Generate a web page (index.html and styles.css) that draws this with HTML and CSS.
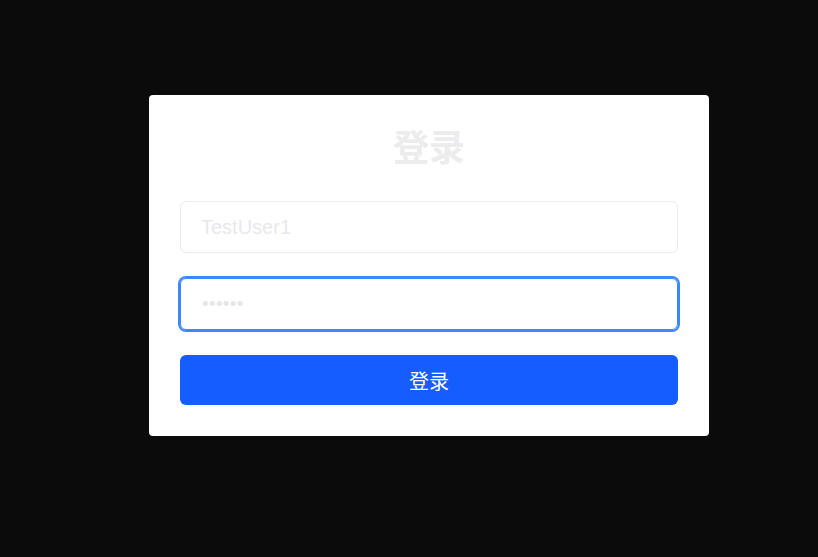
FILE: index.html
```html
<!DOCTYPE html>
<html lang="zh">
<head>
<meta charset="utf-8">
<title>登录</title>
<link rel="stylesheet" href="styles.css">
</head>
<body>
<main class="page">
  <form class="card">
    <h1 class="title">登录</h1>
    <div class="field">TestUser1</div>
    <div class="field field-focus"><span class="dots">••••••</span></div>
    <button type="button" class="btn">登录</button>
  </form>
</main>
</body>
</html>
```
FILE: styles.css
```css
html, body {
  margin: 0;
  padding: 0;
  background: #0b0b0b;
  width: 818px;
  height: 557px;
  overflow: hidden;
}
.page {
  display: flex;
  justify-content: flex-start;
  padding: 95px 0 0 149px;
  font-family: "Liberation Sans", Arial, "Noto Sans CJK SC", sans-serif;
}
.card {
  box-sizing: border-box;
  width: 560px;
  height: 341px;
  background: #ffffff;
  border-radius: 4px;
  padding: 23px 31px 31px;
  display: flex;
  flex-direction: column;
}
.title {
  margin: 0 0 29px;
  height: 54px;
  line-height: 54px;
  text-align: center;
  font-family: "Noto Sans CJK SC", sans-serif;
  font-size: 36px;
  font-weight: 700;
  color: #ececec;
}
.field {
  box-sizing: border-box;
  height: 52px;
  border: 1px solid #ebebeb;
  border-radius: 6px;
  padding: 0 20px;
  display: flex;
  align-items: center;
  font-size: 20px;
  color: #e8e8ec;
  margin-bottom: 25px;
}
.field-focus {
  border-color: #3c86ff;
  box-shadow: 0 0 0 2px #3c86ff;
  border-radius: 6px;
}
.dots {
  font-size: 19px;
  letter-spacing: 0.3px;
  color: #e6e6ea;
  padding-left: 1px;
}
.btn {
  height: 50px;
  border: none;
  border-radius: 6px;
  background: #165dff;
  color: #ffffff;
  font-family: "Noto Sans CJK SC", sans-serif;
  font-size: 20px;
  font-weight: 400;
  cursor: pointer;
}
```
